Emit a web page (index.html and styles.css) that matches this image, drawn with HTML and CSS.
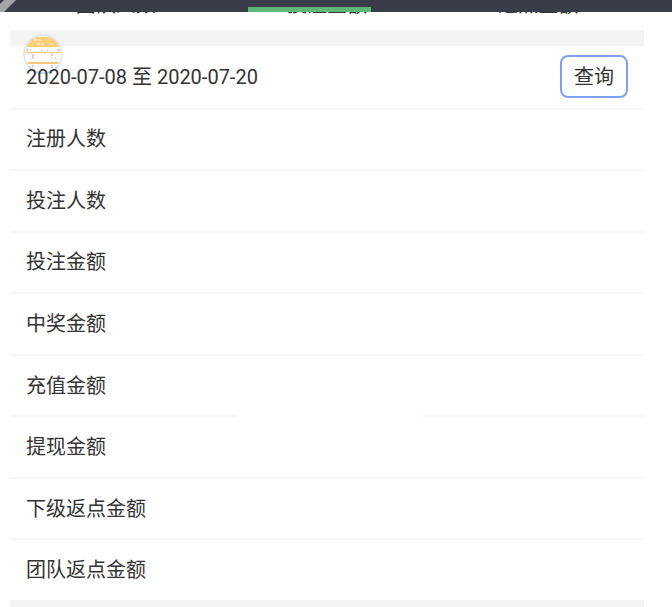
FILE: index.html
```html
<!DOCTYPE html>
<html lang="zh-CN">

<head>
    <meta charset="UTF-8">
    <meta name="viewport" content="width=device-width, initial-scale=1.0">
    <title>团队报表</title>
    <link rel="stylesheet" href="styles.css">
</head>

<body>
    <!-- Top bar -->
    <header class="topbar">
        <svg class="topbar-corner" width="16" height="12" viewBox="0 0 16 12" aria-hidden="true">
            <path d="M0 0H16L4 12H0Z" fill="#a3a4a8" />
            <path d="M0 0H4L0 4Z" fill="#3a3d49" />
        </svg>
        <div class="topbar-active"></div>
    </header>

    <!-- Tabs, scrolled under the top bar -->
    <nav class="tabs">
        <span>团队人数</span>
        <span>投注金额</span>
        <span>返点金额</span>
    </nav>

    <main class="report">
        <div class="band">
            <svg class="badge" viewBox="0 0 40 40" aria-hidden="true">
                <defs>
                    <clipPath id="badgeClip">
                        <circle cx="20" cy="20" r="18" />
                    </clipPath>
                </defs>
                <circle cx="20" cy="20" r="19" fill="#fff" stroke="#dce6ee" stroke-width="1.5" />
                <g clip-path="url(#badgeClip)">
                    <path d="M0 3H40V13H0Z" fill="#fbcf78" />
                    <path d="M0 18H40V19H0ZM0 28H40V30H0Z" fill="#fdc778" />
                    <path d="M11 6H18M14 10H21M28 10H30" stroke="#fff" stroke-opacity="0.8" stroke-dasharray="3 1" />
                    <path d="M3 16H5M7 16H8M18 16H19M24 16H25M34 16H38M10 20V23M29 20V22M10 31V33M29 31V34" stroke="#f58b7a" />
                    <path d="M9 24H11M29 24H30M32 24H33" stroke="#a9a9a9" />
                </g>
                <path d="M5 32A19 19 0 0 0 35 32" fill="none" stroke="#b5dcfa" stroke-width="1.500" />
            </svg>
        </div>

        <!-- Report rows -->
        <div class="rows">
            <div class="row">
                <span class="dates">2020-07-08 至 2020-07-20</span>
                <button type="button" class="query">查询</button>
            </div>
            <div class="row">注册人数</div>
            <div class="row">投注人数</div>
            <div class="row">投注金额</div>
            <div class="row">中奖金额</div>
            <div class="row">充值金额</div>
            <div class="row row-split">提现金额</div>
            <div class="row">下级返点金额</div>
            <div class="row">团队返点金额</div>
        </div>
        <div class="band-end"></div>
    </main>
</body>

</html>
```

FILE: styles.css
```css
/* General styling */
body {
    margin: 0;
    min-height: 100vh;
    display: flex;
    flex-direction: column;
    background-color: #fff;
    color: #333;
    font-family: Roboto, "Noto Sans CJK SC", sans-serif;
    font-size: 20px;
    line-height: 24px;
}

/* Top bar */
.topbar {
    position: sticky;
    top: 0;
    z-index: 2;
    height: 12px;
    display: flex;
    align-items: flex-end;
    background-color: #3a3d49;
}

.topbar-corner {
    position: absolute;
    left: 0;
    top: 0;
}

.topbar-active {
    width: 123px;
    height: 5px;
    margin-left: 248px;
    background-color: #5fb878;
}

/* Tabs */
.tabs {
    display: grid;
    grid-template-columns: repeat(3, 1fr);
    margin: -19px 28px 0 10px;
    padding-bottom: 13px;
    text-align: center;
}

/* Report */
.report {
    flex: 1;
    display: flex;
    flex-direction: column;
    margin: 0 28px 0 10px;
}

.band {
    position: relative;
    height: 16px;
    background-color: #f4f4f4;
}

.band-end {
    height: 7px;
    background-color: #f4f4f4;
}

.badge {
    position: absolute;
    left: 13px;
    top: 4px;
    width: 40px;
    height: 40px;
}

.rows {
    flex: 1;
    display: grid;
    grid-auto-rows: 1fr;
}

.row {
    position: relative;
    display: flex;
    align-items: center;
    justify-content: space-between;
    padding: 0 16px;
    border-top: 2px solid #f7f7f7;
}

.row:first-child {
    border-top: none;
}

/* The divider above this row is open in the middle */
.row-split::before {
    content: "";
    position: absolute;
    left: 36%;
    right: 35%;
    top: -2px;
    height: 2px;
    background-color: #fff;
}

.query {
    box-sizing: border-box;
    width: 68px;
    height: 43px;
    padding: 0;
    border: 2px solid #7ba2f7;
    border-radius: 8px;
    background-color: #fff;
    color: inherit;
    font: inherit;
    cursor: pointer;
}
```
